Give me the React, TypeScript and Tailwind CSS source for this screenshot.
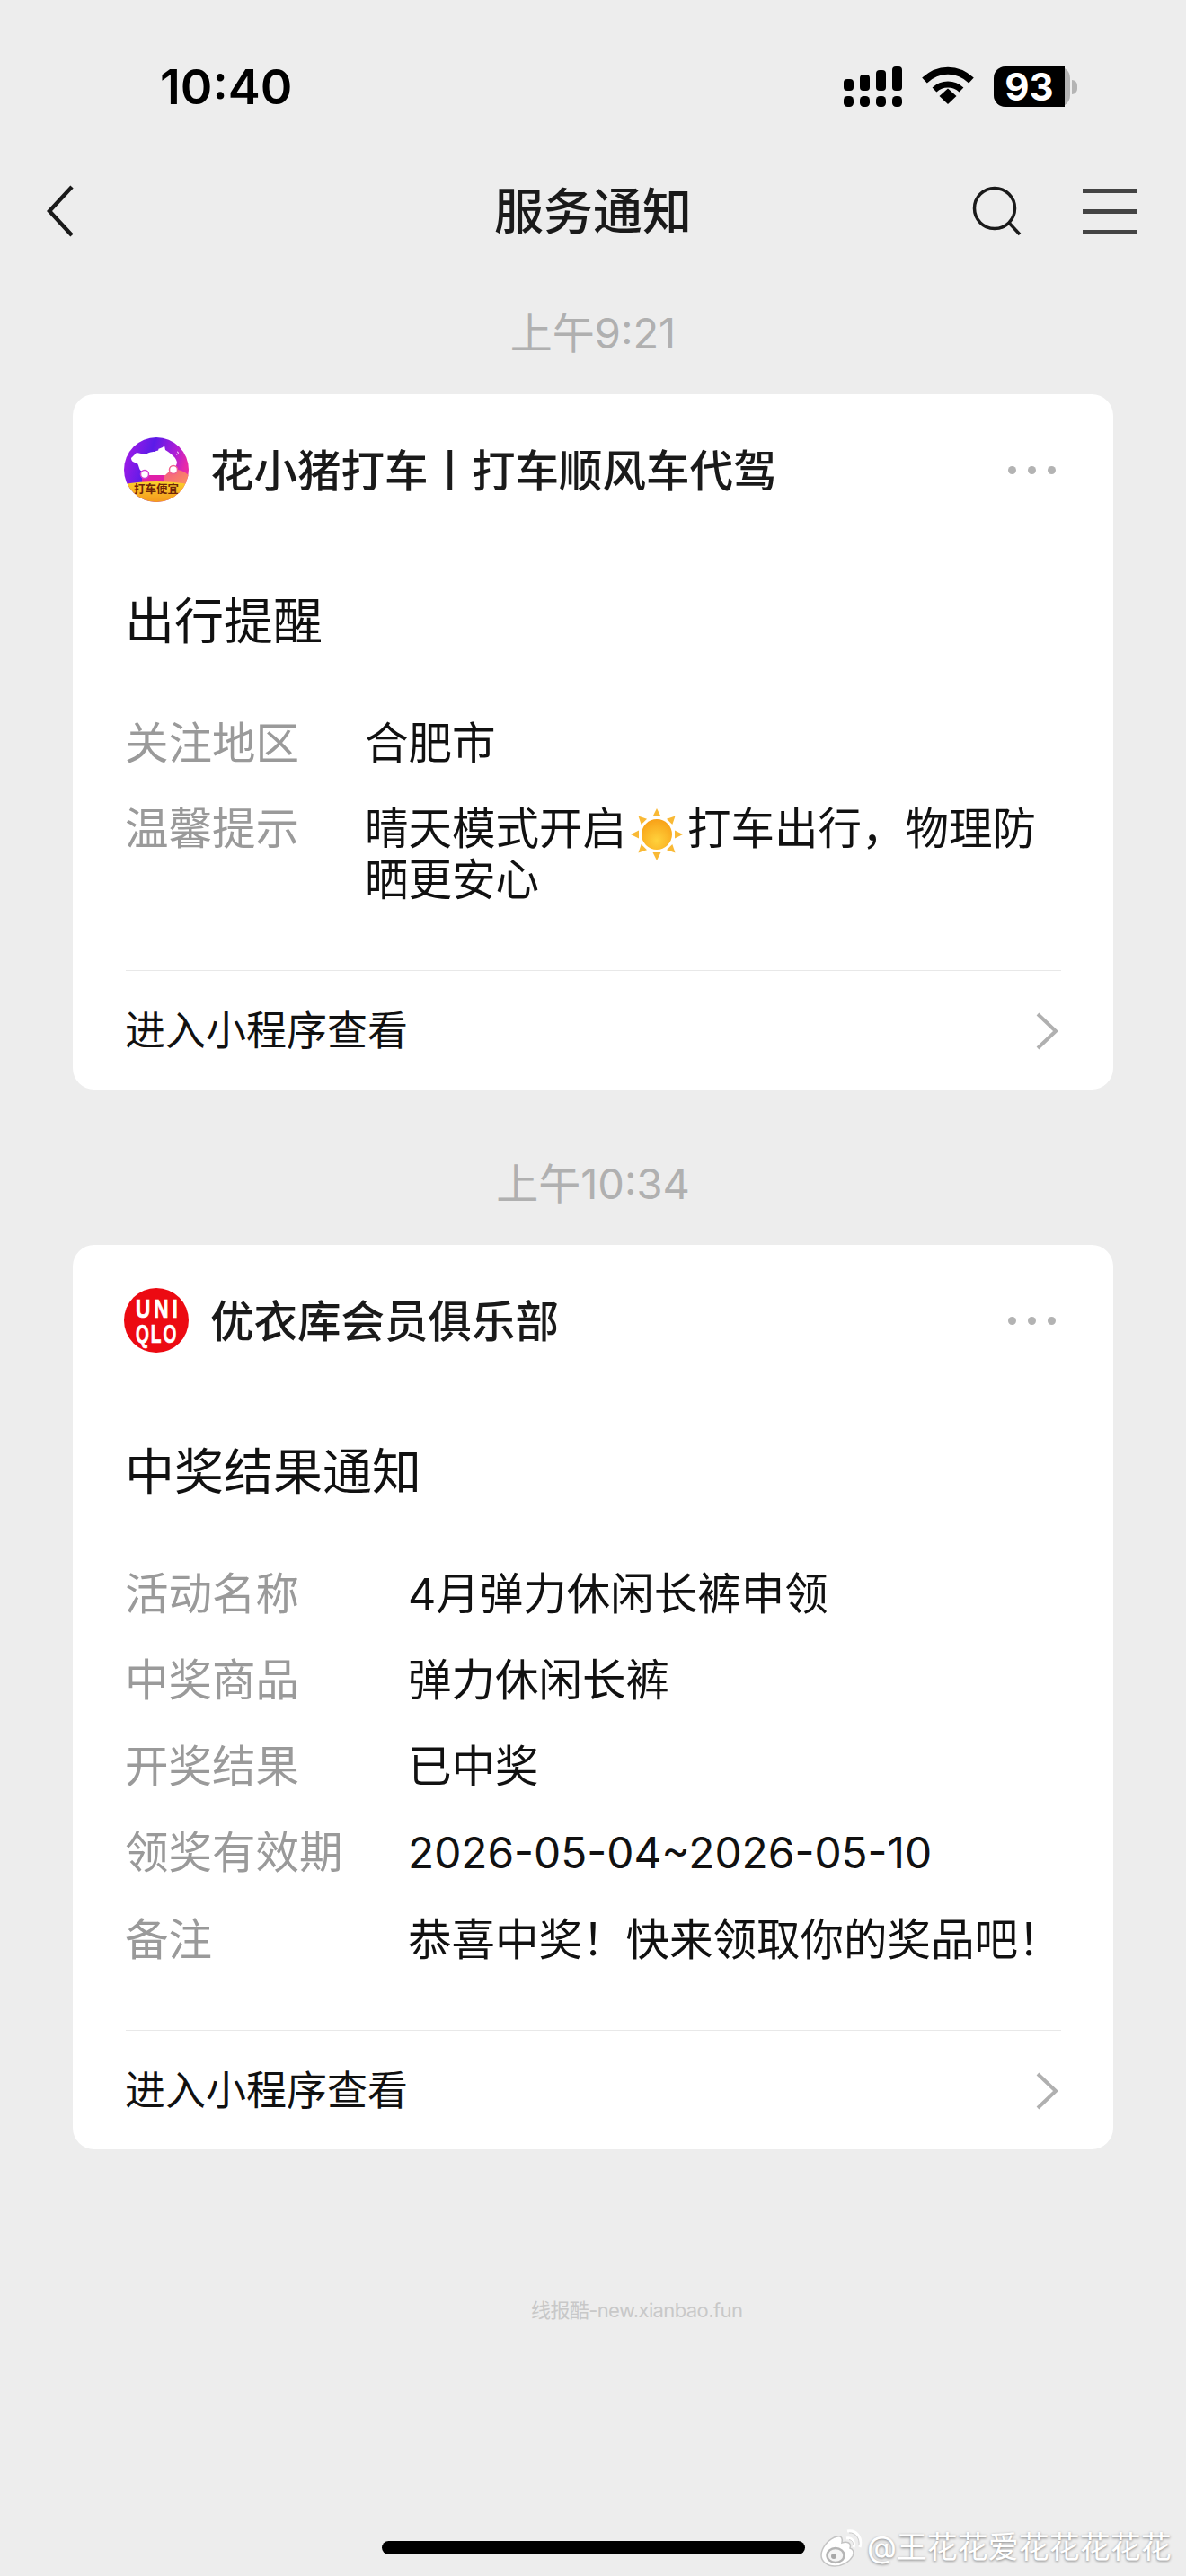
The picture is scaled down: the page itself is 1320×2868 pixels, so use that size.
const FONT = "font-['Inter','Noto_Sans_CJK_SC',sans-serif]";

function Signal() {
  const tops = [14, 9, 4, 0];
  return (
    <svg width="65" height="45" viewBox="0 0 65 45" fill="#000">
      {tops.map((t, i) => (
        <g key={i}>
          <rect x={i * 18} y={t} width="11" height={27 - t} rx="4" />
          <rect x={i * 18} y="33" width="11" height="12" rx="4.5" />
        </g>
      ))}
    </svg>
  );
}

function Wifi() {
  return (
    <svg width="58" height="42" viewBox="0 0 58 42" fill="none">
      <path d="M3 15.500C18 1 40 1 55 15.500" stroke="#000" strokeWidth="8" />
      <path d="M14 26C22.500 18 35.500 18 44 26" stroke="#000" strokeWidth="7" />
      <path d="M19.500 33L29 24.500L38.500 33L29 42Z" fill="#000" />
    </svg>
  );
}

function Battery() {
  return (
    <div className="flex items-center">
      <div className="flex h-[45px] w-[85px] items-center rounded-[13px] bg-[#b4b4b4]">
        <div className="flex h-full w-[79px] items-center justify-center rounded-l-[13px] bg-black text-[42px] font-bold leading-none text-white font-['Inter',sans-serif]">
          93
        </div>
      </div>
      <div className="ml-[2px] h-[16px] w-[6px] rounded-r-full bg-[#b4b4b4]" />
    </div>
  );
}

function PigLogo() {
  return (
    <svg width="72" height="72" viewBox="0 0 72 72" className="shrink-0">
      <defs>
        <linearGradient id="pigBg" x1="0" y1="0" x2="1" y2="0.3">
          <stop offset="0" stopColor="#b01ae6" />
          <stop offset="0.45" stopColor="#5a1be8" />
          <stop offset="0.8" stopColor="#b01ed6" />
          <stop offset="1" stopColor="#e82aa8" />
        </linearGradient>
        <linearGradient id="pigBand" x1="0" y1="0" x2="0" y2="1">
          <stop offset="0" stopColor="#fbd02c" />
          <stop offset="1" stopColor="#f59a1e" />
        </linearGradient>
        <linearGradient id="pigHill" x1="0" y1="0" x2="1" y2="1">
          <stop offset="0" stopColor="#f4568a" />
          <stop offset="1" stopColor="#fb9a55" />
        </linearGradient>
        <clipPath id="pigClip">
          <circle cx="36" cy="36" r="36" />
        </clipPath>
      </defs>
      <g clipPath="url(#pigClip)">
        <rect width="72" height="72" fill="url(#pigBg)" />
        <rect x="20" y="38" width="30" height="14" fill="#e01fa8" />
        <path d="M44 44C50 32 62 34 72 42V56H44Z" fill="url(#pigHill)" />
        <path
          d="M8 23L14 17L24 19C30 15 33 17 36 15C40 14 38 13 38 13L43 11L45 9L46 14C52 18 58 22 59 28C58 32 57 34 53 36L48 40L46 42H28L26 39L20 38C16 36 17 30 14 28C10 28 8 26 8 23Z"
          fill="#fff"
        />
        <circle cx="23" cy="41" r="4.500" fill="#fff" stroke="#d23bd0" strokeWidth="1.500" />
        <circle cx="55" cy="36" r="4.500" fill="#fff" stroke="#f0608e" strokeWidth="1.500" />
        <path d="M58 19c3 0 3-3 1-3" stroke="#fff" strokeWidth="1" fill="none" />
        <path d="M0 52C12 50 24 49 36 49C48 49 60 50 72 52V72H0Z" fill="url(#pigBand)" />
        <text
          x="36"
          y="62"
          textAnchor="middle"
          fontSize="12.500"
          fontWeight="700"
          fill="#6e2408"
          fontFamily="'Noto Sans CJK SC',sans-serif"
        >
          打车便宜
        </text>
      </g>
    </svg>
  );
}

function UniqloLogo() {
  return (
    <svg width="72" height="72" viewBox="0 0 72 72" className="shrink-0">
      <circle cx="36" cy="36" r="36" fill="#ec0a12" />
      <text
        transform="translate(13 33) scale(0.78 1)"
        fontSize="29"
        fontWeight="700"
        letterSpacing="5"
        fill="#fff"
        stroke="#fff"
        strokeWidth="0.7"
        fontFamily="'Liberation Sans',sans-serif"
      >
        UNI
      </text>
      <text
        transform="translate(13 61) scale(0.66 1)"
        fontSize="29"
        fontWeight="700"
        letterSpacing="3"
        fill="#fff"
        stroke="#fff"
        strokeWidth="0.7"
        fontFamily="'Liberation Sans',sans-serif"
      >
        QLO
      </text>
    </svg>
  );
}

function Sun() {
  const rays = [0, 45, 90, 135, 180, 225, 270, 315];
  return (
    <svg width="58" height="58" viewBox="0 0 58 58" className="mx-[5px] my-[-8px] inline-block align-[-10px]">
      <defs>
        <radialGradient id="sunFill" cx="0.5" cy="0.7" r="0.8">
          <stop offset="0" stopColor="#ffd23c" />
          <stop offset="1" stopColor="#f79a12" />
        </radialGradient>
      </defs>
      {rays.map((r) => (
        <path key={r} d="M29 0L33.500 9H24.500Z" fill="#f9b935" transform={`rotate(${r} 29 29)`} />
      ))}
      <circle cx="29" cy="29" r="17" fill="url(#sunFill)" />
    </svg>
  );
}

function Row({ label, labelWidth, children }: { label: string; labelWidth: string; children: React.ReactNode }) {
  return (
    <div className="flex text-[48.500px] leading-[57px]">
      <div className={`${labelWidth} ml-[-1px] shrink-0 text-[#9a9a9a]`}>{label}</div>
      <div className="ml-[1px] flex-1 whitespace-nowrap text-[#111]">{children}</div>
    </div>
  );
}

function Card({
  logo,
  name,
  title,
  labelWidth,
  tail,
  rowGap,
  rows,
}: {
  logo: React.ReactNode;
  name: React.ReactNode;
  title: string;
  labelWidth: string;
  tail: string;
  rowGap: string;
  rows: { label: string; value: React.ReactNode }[];
}) {
  return (
    <div className="mx-[81px] rounded-[24px] bg-white pl-[59px] pr-[58px] pt-[48px]">
      <div className="ml-[-2px] flex h-[72px] items-center">
        {logo}
        <div className="ml-[24px] pt-[3px] text-[48.500px] font-medium leading-[58px] text-[#1a1a1a]">{name}</div>
        <div className="ml-auto mr-[6px] flex gap-[13px]">
          <span className="h-[9px] w-[9px] rounded-full bg-[#b3b3b3]" />
          <span className="h-[9px] w-[9px] rounded-full bg-[#b3b3b3]" />
          <span className="h-[9px] w-[9px] rounded-full bg-[#b3b3b3]" />
        </div>
      </div>
      <div className="ml-[-1px] mt-[102px] text-[55px] leading-[60px] text-[#111]">{title}</div>
      <div className={`mt-[78px] flex flex-col ${rowGap}`}>
        {rows.map((r) => (
          <Row key={r.label} label={r.label} labelWidth={labelWidth}>
            {r.value}
          </Row>
        ))}
      </div>
      <div className={`${tail} border-t border-[#e8e8e8]`}>
        <div className="ml-[-1px] flex h-[132px] items-center justify-between pt-[2px] text-[45px] text-[#111]">
          <span>进入小程序查看</span>
          <svg width="26" height="42" viewBox="0 0 26 42" fill="none" className="mr-[3px]">
            <path d="M3 2L23 21L3 40" stroke="#b0b0b0" strokeWidth="4" />
          </svg>
        </div>
      </div>
    </div>
  );
}

function TimeLabel({ children }: { children: React.ReactNode }) {
  return (
    <div className="mb-[7px] flex h-[122px] items-center justify-center text-[47px] text-[#b0b0b0]">{children}</div>
  );
}

export default function App() {
  return (
    <div className={`${FONT} relative h-[2868px] w-[1320px] overflow-hidden bg-[#ededed]`}>
      <div className="flex h-[160px] items-start justify-between pl-[178px] pr-[121px] pt-[74px]">
        <div className="text-[54px] font-semibold leading-[46px] text-black">10:40</div>
        <div className="flex items-start">
          <Signal />
          <div className="mx-[22px]">
            <Wifi />
          </div>
          <Battery />
        </div>
      </div>
      <div className="relative flex h-[150px] items-center justify-between pl-[52px] pr-[55px]">
        <svg width="30" height="58" viewBox="0 0 30 58" fill="none">
          <path d="M28 2L3 29L28 56" stroke="#1a1a1a" strokeWidth="4.500" />
        </svg>
        <div className="absolute left-0 right-0 text-center text-[55px] font-medium text-[#1a1a1a]">服务通知</div>
        <div className="flex items-center gap-[68px]">
          <svg width="55" height="56" viewBox="0 0 55 56" fill="none">
            <circle cx="25" cy="25" r="22.500" stroke="#1a1a1a" strokeWidth="3.500" />
            <path d="M41 41L53 54" stroke="#1a1a1a" strokeWidth="3.500" />
          </svg>
          <div className="flex w-[60px] flex-col gap-[18px]">
            <span className="h-[5px] bg-[#444]" />
            <span className="h-[5px] bg-[#444]" />
            <span className="h-[5px] bg-[#444]" />
          </div>
        </div>
      </div>

      <TimeLabel>上午9:21</TimeLabel>
      <Card
        logo={<PigLogo />}
        name="花小猪打车丨打车顺风车代驾"
        title="出行提醒"
        labelWidth="w-[266px]"
        tail="mt-[72px]"
        rowGap="gap-[38px]"
        rows={[
          { label: "关注地区", value: "合肥市" },
          {
            label: "温馨提示",
            value: (
              <>
                <span>晴天模式开启</span>
                <Sun />
                <span>打车出行，物理防</span>
                <br />
                <span>晒更安心</span>
              </>
            ),
          },
        ]}
      />
      <div className="mt-[44px]">
        <TimeLabel>上午10:34</TimeLabel>
      </div>
      <Card
        logo={<UniqloLogo />}
        name="优衣库会员俱乐部"
        title="中奖结果通知"
        labelWidth="w-[314px]"
        tail="mt-[72px]"
        rowGap="gap-[39px]"
        rows={[
          { label: "活动名称", value: "4月弹力休闲长裤申领" },
          { label: "中奖商品", value: "弹力休闲长裤" },
          { label: "开奖结果", value: "已中奖" },
          { label: "领奖有效期", value: <span className="text-[47.800px]">2026-05-04~2026-05-10</span> },
          { label: "备注", value: "恭喜中奖！快来领取你的奖品吧！" },
        ]}
      />

      <div className="absolute left-[591px] top-[2557px] text-[22px] leading-[30px] tracking-[-0.6px] text-[#c8c8c8]">
        线报酷-new.xianbao.fun
      </div>
      <div className="absolute left-[425px] top-[2829px] h-[15px] w-[471px] rounded-full bg-black" />
      <div className="absolute left-[912px] top-[2813px] flex items-center">
        <svg width="48" height="44" viewBox="0 0 48 44" fill="none">
          <path
            d="M2 31C2 23 10 12 20 10C25 9 26 13 25 17C31 15 36 17 34 23C38 24 39 28 37 32C33 39 25 43 17 43C9 43 2 38 2 31Z"
            fill="#fff"
            stroke="#c4c4c4"
            strokeWidth="1.500"
          />
          <ellipse cx="18" cy="31" rx="9.500" ry="8" fill="#f4f4f4" stroke="#b5b5b5" strokeWidth="2.500" />
          <circle cx="16" cy="32" r="3" fill="#a8a8a8" />
          <path d="M30 12C36 11 40 16 38 22" stroke="#fff" strokeWidth="3" />
          <path d="M31 4C41 2 48 11 45 22" stroke="#fff" strokeWidth="3" />
          <path d="M33 13.500C36.500 14 38 17 37.500 20M33 6C40 5.500 45 12 44 20" stroke="#c4c4c4" strokeWidth="0.800" />
        </svg>
        <span className="ml-[5px] text-[34px] leading-[46px] text-white [text-shadow:0_1px_3px_rgba(0,0,0,0.45)]">
          @王花花爱花花花花花
        </span>
      </div>
    </div>
  );
}
